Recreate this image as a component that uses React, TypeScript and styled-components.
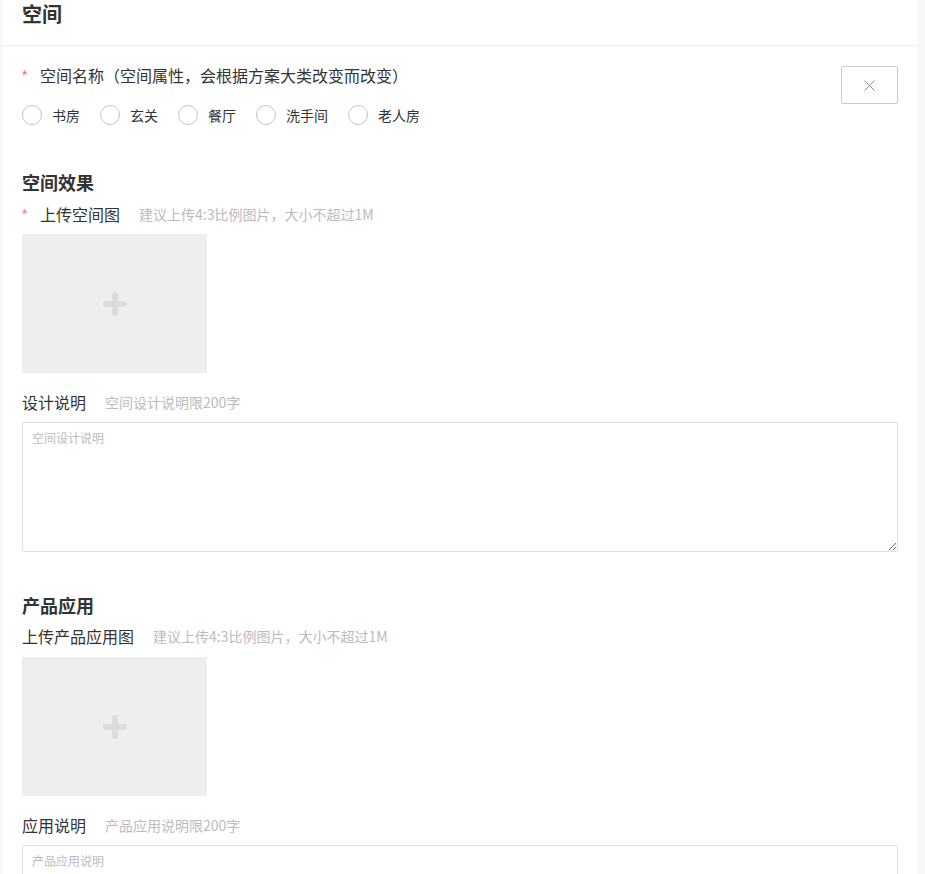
import React from "react";
import styled, { createGlobalStyle } from "styled-components";

const Global = createGlobalStyle`
  html, body { margin: 0; padding: 0; background: #f7f7f7; }
  body { font-family: "Noto Sans CJK SC", "Noto Sans", sans-serif; color: #333; }
  * { box-sizing: border-box; }
`;

const Card = styled.div`
  margin: 0 7px 0 2px;
  background: #fff;
  min-height: 874px;
`;

const Header = styled.div`
  height: 46px;
  padding: 0 20px;
  border-bottom: 1px solid #eee;
`;

const PageTitle = styled.h1`
  margin: 0;
  font-size: 20px;
  line-height: 28px;
  font-weight: 700;
  color: #333;
`;

const Body = styled.div`
  padding: 0 20px 40px;
`;

const TopRow = styled.div`
  display: flex;
  justify-content: space-between;
  align-items: flex-start;
  padding-top: 17px;
`;

const Column = styled.div`
  display: flex;
  flex-direction: column;
`;

const LabelLine = styled.div<{ $mt?: number }>`
  display: flex;
  align-items: center;
  margin-top: ${(p) => p.$mt ?? 0}px;
  height: 22px;
`;

const Star = styled.span`
  width: 18px;
  color: #f56c6c;
  font-size: 14px;
  line-height: 22px;
  font-family: "Liberation Sans", sans-serif;
`;

const Label = styled.span`
  font-size: 16px;
  line-height: 22px;
  color: #333;
`;

const Hint = styled.span`
  margin-left: 19px;
  font-size: 14px;
  line-height: 22px;
  color: #bbb;
`;

const RadioRow = styled.div`
  display: flex;
  align-items: center;
  margin-top: 19px;
`;

const RadioItem = styled.label`
  display: flex;
  align-items: center;
  margin-right: 20px;
  cursor: pointer;
`;

const Circle = styled.span`
  width: 20px;
  height: 20px;
  border-radius: 50%;
  border: 1.5px solid #c4c4c4;
  background: #fff;
  margin-right: 10px;
`;

const RadioText = styled.span`
  font-size: 14px;
  line-height: 20px;
  color: #333;
`;

const CloseButton = styled.button`
  margin-top: 3px;
  width: 57px;
  height: 38px;
  border: 1px solid #ccc;
  border-radius: 2px;
  background: #fff;
  display: flex;
  align-items: center;
  justify-content: center;
  padding: 0;
  cursor: pointer;
`;

const SectionTitle = styled.h2<{ $mt: number }>`
  margin: ${(p) => p.$mt}px 0 0;
  font-size: 18px;
  line-height: 24px;
  font-weight: 700;
  color: #333;
`;

const Upload = styled.div<{ $mt: number }>`
  margin-top: ${(p) => p.$mt}px;
  width: 185px;
  height: 139px;
  background: #eee;
  display: flex;
  align-items: center;
  justify-content: center;
`;

const TextArea = styled.textarea`
  display: block;
  margin-top: 9px;
  width: 100%;
  height: 130px;
  border: 1px solid #e0e0e0;
  border-radius: 2px;
  padding: 6px 9px;
  font-family: "Noto Sans CJK SC", "Noto Sans", sans-serif;
  font-size: 12px;
  line-height: 18px;
  color: #333;
  outline: none;
  &::placeholder { color: #bbb; }
`;

const Plus = () => (
  <svg width="24" height="24" viewBox="0 0 24 24">
    <path d="M12 3v18M3 12h18" stroke="#dcdcdc" strokeWidth="6" strokeLinecap="round" />
  </svg>
);

const Cross = () => (
  <svg width="11" height="11" viewBox="0 0 11 11">
    <path d="M0.5 0.5l10 10M10.5 0.5l-10 10" stroke="#8a8f99" strokeWidth="1" />
  </svg>
);

const rooms = ["书房", "玄关", "餐厅", "洗手间", "老人房"];

export default function App() {
  return (
    <>
      <Global />
      <Card>
        <Header>
          <PageTitle>空间</PageTitle>
        </Header>
        <Body>
          <TopRow>
            <Column>
              <LabelLine $mt={1}>
                <Star>*</Star>
                <Label>空间名称（空间属性，会根据方案大类改变而改变）</Label>
              </LabelLine>
              <RadioRow>
                {rooms.map((r) => (
                  <RadioItem key={r}>
                    <Circle />
                    <RadioText>{r}</RadioText>
                  </RadioItem>
                ))}
              </RadioRow>
            </Column>
            <CloseButton aria-label="关闭">
              <Cross />
            </CloseButton>
          </TopRow>

          <SectionTitle $mt={45}>空间效果</SectionTitle>
          <LabelLine $mt={9}>
            <Star>*</Star>
            <Label>上传空间图</Label>
            <Hint>建议上传4:3比例图片，大小不超过1M</Hint>
          </LabelLine>
          <Upload $mt={9}>
            <Plus />
          </Upload>
          <LabelLine $mt={18}>
            <Label>设计说明</Label>
            <Hint>空间设计说明限200字</Hint>
          </LabelLine>
          <TextArea placeholder="空间设计说明" />

          <SectionTitle $mt={41}>产品应用</SectionTitle>
          <LabelLine $mt={8}>
            <Label>上传产品应用图</Label>
            <Hint>建议上传4:3比例图片，大小不超过1M</Hint>
          </LabelLine>
          <Upload $mt={10}>
            <Plus />
          </Upload>
          <LabelLine $mt={18}>
            <Label>应用说明</Label>
            <Hint>产品应用说明限200字</Hint>
          </LabelLine>
          <TextArea placeholder="产品应用说明" />
        </Body>
      </Card>
    </>
  );
}
